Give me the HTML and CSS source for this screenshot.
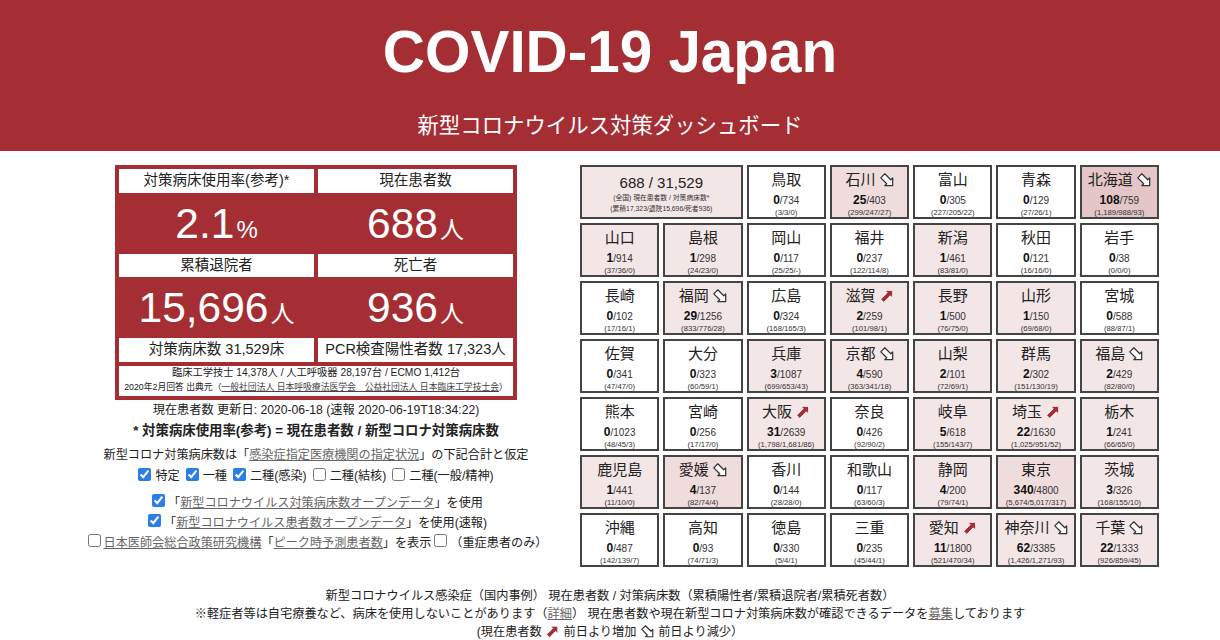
FILE: index.html
```html
<!DOCTYPE html>
<html lang="ja">

<head>
    <meta charset="UTF-8">
    <meta name="viewport" content="width=device-width, initial-scale=1.0">
    <title>COVID-19 Japan</title>
    <link rel="stylesheet" href="styles.css">
</head>

<body>
    <svg class="defs" width="0" height="0">
        <symbol id="up" viewBox="0 0 16 16">
            <path d="M14.5 1.5 L14.5 10.5 L11.8 7.8 L4.3 15.3 L.7 11.7 L8.2 4.2 L5.5 1.5 Z" fill="#a52e34" stroke="#fff" stroke-width="1"/>
        </symbol>
        <symbol id="down" viewBox="0 0 16 16">
            <path d="M14.5 14.5 L5.5 14.5 L7.7 12.3 L.9 5.5 L5.5 .9 L12.3 7.7 L14.5 5.5 Z" fill="#fff" stroke="#333" stroke-width="1.4" stroke-linejoin="round"/>
        </symbol>
    </svg>

    <header class="head">
        <h1>COVID-19 Japan</h1>
        <p>新型コロナウイルス対策ダッシュボード</p>
    </header>

    <div class="main">
        <div class="left">
            <div class="panel">
                <div class="label">対策病床使用率(参考)*</div>
                <div class="label">現在患者数</div>
                <div class="big">2.1<small>%</small></div>
                <div class="big">688<small>人</small></div>
                <div class="label">累積退院者</div>
                <div class="label">死亡者</div>
                <div class="big">15,696<small>人</small></div>
                <div class="big">936<small>人</small></div>
                <div class="label">対策病床数 31,529床</div>
                <div class="label">PCR検査陽性者数 17,323人</div>
                <div class="note">
                    <div class="note1">臨床工学技士 14,378人 / 人工呼吸器 28,197台 / ECMO 1,412台</div>
                    <div class="note2">2020年2月回答 出典元（<a href="#">一般社団法人 日本呼吸療法医学会　公益社団法人 日本臨床工学技士会</a>）</div>
                </div>
            </div>
            <div class="updated">現在患者数 更新日: 2020-06-18 (速報 2020-06-19T18:34:22)</div>
            <div class="formula">* 対策病床使用率(参考) = 現在患者数 / 新型コロナ対策病床数</div>
            <div class="assume">新型コロナ対策病床数は「<a href="#">感染症指定医療機関の指定状況</a>」の下記合計と仮定</div>
            <div class="checks">
                <label><input type="checkbox" checked>特定</label>
                <label><input type="checkbox" checked>一種</label>
                <label><input type="checkbox" checked>二種(感染)</label>
                <label><input type="checkbox">二種(結核)</label>
                <label><input type="checkbox">二種(一般/精神)</label>
            </div>
            <div class="opts">
                <div><input type="checkbox" checked>「<a href="#">新型コロナウイルス対策病床数オープンデータ</a>」を使用</div>
                <div><input type="checkbox" checked>「<a href="#">新型コロナウイルス患者数オープンデータ</a>」を使用(速報)</div>
                <div><input type="checkbox"><a href="#">日本医師会総合政策研究機構</a>「<a href="#">ピーク時予測患者数</a>」を表示<input type="checkbox">（重症患者のみ）</div>
            </div>
        </div>

        <div class="grid" id="grid"></div>
    </div>

    <footer class="foot">
        <div>新型コロナウイルス感染症（国内事例） 現在患者数 / 対策病床数（累積陽性者/累積退院者/累積死者数）</div>
        <div>※軽症者等は自宅療養など、病床を使用しないことがあります（<a href="#">詳細</a>） 現在患者数や現在新型コロナ対策病床数が確認できるデータを<a href="#">募集</a>しております</div>
        <div>(現在患者数 <svg class="ico"><use href="#up"/></svg> 前日より増加 <svg class="ico"><use href="#down"/></svg> 前日より減少）</div>
    </footer>

    <script>
        // name, current, beds, detail, background level, arrow
        var data = [
            ["鳥取", 0, 734, "3/3/0"], ["石川", 25, 403, "299/247/27", 2, "down"], ["富山", 0, 305, "227/205/22"], ["青森", 0, 129, "27/26/1"], ["北海道", 108, 759, "1,189/988/93", 3, "down"],
            ["山口", 1, 914, "37/36/0", 1], ["島根", 1, 298, "24/23/0", 1], ["岡山", 0, 117, "25/25/-"], ["福井", 0, 237, "122/114/8"], ["新潟", 1, 461, "83/81/0", 1], ["秋田", 0, 121, "16/16/0"], ["岩手", 0, 38, "0/0/0"],
            ["長崎", 0, 102, "17/16/1"], ["福岡", 29, 1256, "833/776/28", 1, "down"], ["広島", 0, 324, "168/165/3"], ["滋賀", 2, 259, "101/98/1", 1, "up"], ["長野", 1, 500, "76/75/0", 1], ["山形", 1, 150, "69/68/0", 1], ["宮城", 0, 588, "88/87/1"],
            ["佐賀", 0, 341, "47/47/0"], ["大分", 0, 323, "60/59/1"], ["兵庫", 3, 1087, "699/653/43", 1], ["京都", 4, 590, "363/341/18", 1, "down"], ["山梨", 2, 101, "72/69/1", 1], ["群馬", 2, 302, "151/130/19", 1], ["福島", 2, 429, "82/80/0", 1, "down"],
            ["熊本", 0, 1023, "48/45/3"], ["宮崎", 0, 256, "17/17/0"], ["大阪", 31, 2639, "1,798/1,681/86", 1, "up"], ["奈良", 0, 426, "92/90/2"], ["岐阜", 5, 618, "155/143/7", 1], ["埼玉", 22, 1630, "1,025/951/52", 1, "up"], ["栃木", 1, 241, "66/65/0", 1],
            ["鹿児島", 1, 441, "11/10/0", 1], ["愛媛", 4, 137, "82/74/4", 2, "down"], ["香川", 0, 144, "28/28/0"], ["和歌山", 0, 117, "63/60/3"], ["静岡", 4, 200, "79/74/1", 1], ["東京", 340, 4800, "5,674/5,017/317", 2], ["茨城", 3, 326, "168/155/10", 1],
            ["沖縄", 0, 487, "142/139/7"], ["高知", 0, 93, "74/71/3"], ["徳島", 0, 330, "5/4/1"], ["三重", 0, 235, "45/44/1"], ["愛知", 11, 1800, "521/470/34", 1, "up"], ["神奈川", 62, 3385, "1,426/1,271/93", 1, "down"], ["千葉", 22, 1333, "926/859/45", 1, "down"]
        ];
        var html = '<div class="cell total lv1"><div class="tnum">688 / 31,529</div>' +
            '<div class="tsub">(全国) 現在患者数 / 対策病床数*</div><div class="tsub">(累積17,323/退院15,696/死者936)</div></div>';
        for (var i = 0; i < data.length; i++) {
            var d = data[i];
            var arrow = d[5] ? ' <svg class="ico big-ico"><use href="#' + d[5] + '"/></svg>' : '';
            html += '<div class="cell lv' + (d[4] || 0) + '"><div class="pref">' + d[0] + arrow + '</div>' +
                '<div class="nums"><b>' + d[1] + '</b>/' + d[2] + '</div>' +
                '<div class="detail">(' + d[3] + ')</div></div>';
        }
        document.getElementById("grid").innerHTML = html;
    </script>
</body>

</html>
```

FILE: styles.css
```css
* {
    margin: 0;
    padding: 0;
    box-sizing: border-box;
}

body {
    font-family: "Liberation Sans", "Noto Sans CJK JP", sans-serif;
    color: #222;
    background: #fff;
    font-size: 12px;
    overflow: hidden;
}

a {
    color: #666;
}

input[type="checkbox"] {
    accent-color: #2b7de9;
}

.defs {
    position: absolute;
}

.head {
    height: 151px;
    background: #a52e34;
    color: #fff;
    text-align: center;
}

.head h1 {
    font-size: 58.4px;
    line-height: 67px;
    padding-top: 18px;
    font-weight: 700;
}

.head p {
    font-size: 21.4px;
    line-height: 28px;
    padding-top: 27px;
}

.main {
    display: flex;
    height: 416px;
    padding: 14px 0 0 115px;
}

.left {
    width: 402px;
    display: flex;
    flex-direction: column;
    align-items: center;
    text-align: center;
    white-space: nowrap;
}

.panel {
    width: 100%;
    display: grid;
    grid-template-columns: 1fr 1fr;
    grid-template-rows: 23.5px 61px 23.5px 61px 23.5px 34px;
    column-gap: 4px;
    padding: 4px;
    background: #a52e34;
}

.label {
    background: #fff;
    font-size: 14.5px;
    line-height: 23.5px;
    text-align: center;
}

.big {
    color: #fff;
    font-size: 42.5px;
    line-height: 62px;
}

.big small {
    font-size: 24px;
    margin-left: 2px;
}

.note {
    grid-column: 1 / 3;
    background: #fff;
    margin-top: 4px;
    line-height: 14.5px;
}

.note a {
    color: #444;
}

.note1 {
    font-size: 10.25px;
}

.note2 {
    font-size: 8.8px;
}

.updated {
    font-size: 12.2px;
    line-height: 16px;
    margin-top: 2px;
}

.formula {
    font-size: 13.4px;
    font-weight: 700;
    line-height: 18px;
    margin-top: 4px;
}

.assume {
    font-size: 12.15px;
    line-height: 16px;
    margin-top: 7px;
}

.checks {
    display: flex;
    justify-content: center;
    gap: 6px;
    font-size: 12.15px;
    line-height: 20px;
    margin-top: 3px;
}

.checks input {
    margin: 0 4px 0 0;
    vertical-align: -1px;
}

.opts {
    font-size: 12.15px;
    line-height: 20px;
    margin-top: 7px;
}

.opts input {
    margin: 0 3px;
    vertical-align: 0;
}

.grid {
    width: 579px;
    height: 402px;
    margin-left: 63px;
    display: grid;
    grid-template-columns: repeat(7, 1fr);
    grid-template-rows: repeat(7, 1fr);
    gap: 4px;
}

.cell {
    border: 2px solid #444;
    background: #fff;
    text-align: center;
    overflow: hidden;
    white-space: nowrap;
}

.lv1 {
    background: #f3e6e7;
}

.lv2 {
    background: #efdcdd;
}

.lv3 {
    background: #e4c6c8;
}

.total {
    grid-column: span 2;
}

.tnum {
    font-size: 15px;
    line-height: 18px;
    margin-top: 7px;
}

.tsub {
    font-size: 6.8px;
    line-height: 11px;
    color: #333;
}

.pref {
    font-size: 15px;
    line-height: 18px;
    margin-top: 4px;
}

.nums {
    font-size: 10px;
    line-height: 13px;
    margin-top: 5px;
    color: #333;
}

.nums b {
    font-size: 12px;
    color: #111;
}

.detail {
    font-size: 7.7px;
    line-height: 11px;
    color: #333;
}

.ico {
    width: 13px;
    height: 13px;
    margin: 0 1px;
    vertical-align: -2px;
}

.big-ico {
    width: 14px;
    height: 14px;
    margin: 0;
}

.foot {
    text-align: center;
    font-size: 12.2px;
    line-height: 18px;
    padding-top: 20px;
}
```
